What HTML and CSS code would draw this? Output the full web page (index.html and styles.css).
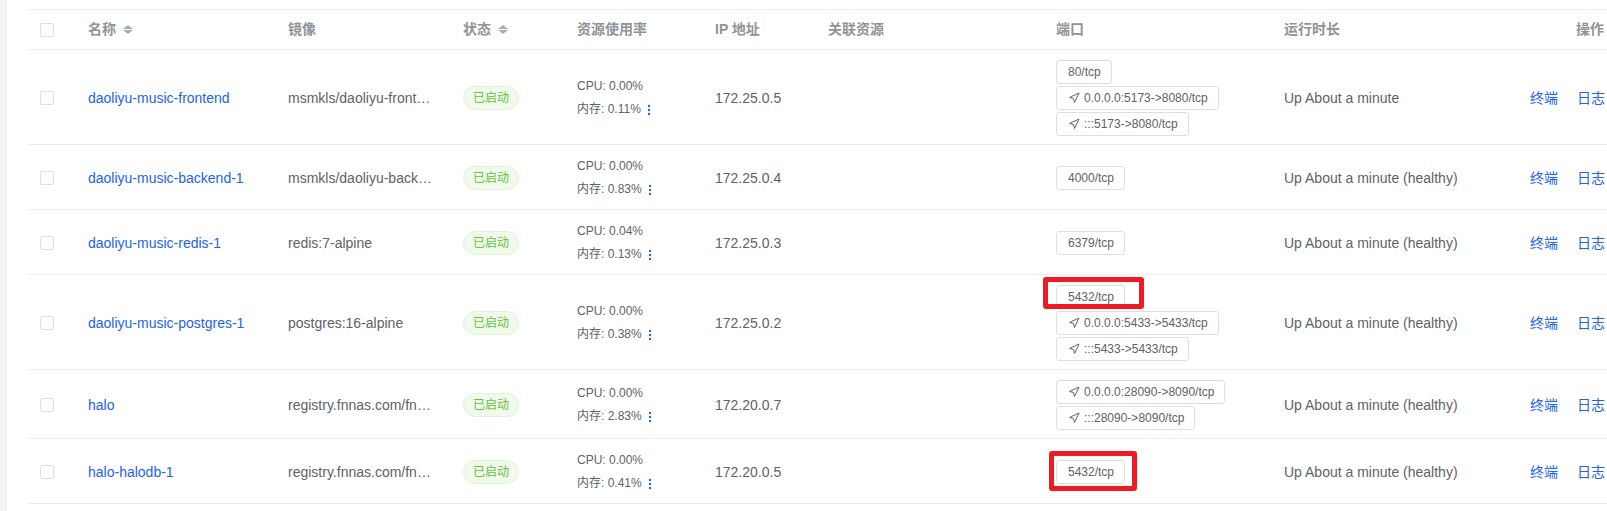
FILE: index.html
```html
<!DOCTYPE html>
<html lang="zh-CN">
<head>
<meta charset="utf-8">
<title>容器列表</title>
<link rel="stylesheet" href="styles.css">
</head>
<body>
<div class="page">
  <div class="side"></div>
  <div class="main">
    <table class="grid">
      <colgroup>
        <col class="w-sel"><col class="w-name"><col class="w-img"><col class="w-status"><col class="w-res"><col class="w-ip"><col class="w-rel"><col class="w-port"><col class="w-up"><col class="w-op">
      </colgroup>
      <thead>
        <tr>
          <th class="sel"><span class="cb"></span></th>
          <th><span class="sortable">名称<span class="caret"><i class="up"></i><i class="down"></i></span></span></th>
          <th>镜像</th>
          <th><span class="sortable">状态<span class="caret"><i class="up"></i><i class="down"></i></span></span></th>
          <th>资源使用率</th>
          <th>IP 地址</th>
          <th>关联资源</th>
          <th>端口</th>
          <th>运行时长</th>
          <th class="op-h">操作</th>
        </tr>
      </thead>
      <tbody>
        <tr>
          <td class="sel"><span class="cb"></span></td>
          <td><a class="link">daoliyu-music-frontend</a></td>
          <td><div class="ell" title="msmkls/daoliyu-frontend:latest">msmkls/daoliyu-front…</div></td>
          <td><span class="badge">已启动</span></td>
          <td><div class="res">CPU: 0.00%</div><div class="res">内存: 0.11%<svg class="kebab" viewBox="0 0 4 12" width="4" height="12"><circle cx="2" cy="2" r="1.2"/><circle cx="2" cy="6" r="1.2"/><circle cx="2" cy="10" r="1.2"/></svg></div></td>
          <td>172.25.0.5</td>
          <td></td>
          <td><div class="ports"><span class="tag">80/tcp</span><span class="tag"><svg class="nav" viewBox="0 0 24 24" width="12" height="12"><polygon points="3 11 22 2 13 21 11 13 3 11"/></svg>0.0.0.0:5173-&gt;8080/tcp</span><span class="tag"><svg class="nav" viewBox="0 0 24 24" width="12" height="12"><polygon points="3 11 22 2 13 21 11 13 3 11"/></svg>:::5173-&gt;8080/tcp</span></div></td>
          <td>Up About a minute</td>
          <td><div class="ops"><a class="link">终端</a><a class="link">日志</a></div></td>
        </tr>
        <tr>
          <td class="sel"><span class="cb"></span></td>
          <td><a class="link">daoliyu-music-backend-1</a></td>
          <td><div class="ell" title="msmkls/daoliyu-backend:latest">msmkls/daoliyu-back…</div></td>
          <td><span class="badge">已启动</span></td>
          <td><div class="res">CPU: 0.00%</div><div class="res">内存: 0.83%<svg class="kebab" viewBox="0 0 4 12" width="4" height="12"><circle cx="2" cy="2" r="1.2"/><circle cx="2" cy="6" r="1.2"/><circle cx="2" cy="10" r="1.2"/></svg></div></td>
          <td>172.25.0.4</td>
          <td></td>
          <td><div class="ports"><span class="tag">4000/tcp</span></div></td>
          <td>Up About a minute (healthy)</td>
          <td><div class="ops"><a class="link">终端</a><a class="link">日志</a></div></td>
        </tr>
        <tr>
          <td class="sel"><span class="cb"></span></td>
          <td><a class="link">daoliyu-music-redis-1</a></td>
          <td><div class="ell">redis:7-alpine</div></td>
          <td><span class="badge">已启动</span></td>
          <td><div class="res">CPU: 0.04%</div><div class="res">内存: 0.13%<svg class="kebab" viewBox="0 0 4 12" width="4" height="12"><circle cx="2" cy="2" r="1.2"/><circle cx="2" cy="6" r="1.2"/><circle cx="2" cy="10" r="1.2"/></svg></div></td>
          <td>172.25.0.3</td>
          <td></td>
          <td><div class="ports"><span class="tag">6379/tcp</span></div></td>
          <td>Up About a minute (healthy)</td>
          <td><div class="ops"><a class="link">终端</a><a class="link">日志</a></div></td>
        </tr>
        <tr>
          <td class="sel"><span class="cb"></span></td>
          <td><a class="link">daoliyu-music-postgres-1</a></td>
          <td><div class="ell">postgres:16-alpine</div></td>
          <td><span class="badge">已启动</span></td>
          <td><div class="res">CPU: 0.00%</div><div class="res">内存: 0.38%<svg class="kebab" viewBox="0 0 4 12" width="4" height="12"><circle cx="2" cy="2" r="1.2"/><circle cx="2" cy="6" r="1.2"/><circle cx="2" cy="10" r="1.2"/></svg></div></td>
          <td>172.25.0.2</td>
          <td></td>
          <td><div class="ports"><span class="tag mark mark-a">5432/tcp</span><span class="tag"><svg class="nav" viewBox="0 0 24 24" width="12" height="12"><polygon points="3 11 22 2 13 21 11 13 3 11"/></svg>0.0.0.0:5433-&gt;5433/tcp</span><span class="tag"><svg class="nav" viewBox="0 0 24 24" width="12" height="12"><polygon points="3 11 22 2 13 21 11 13 3 11"/></svg>:::5433-&gt;5433/tcp</span></div></td>
          <td>Up About a minute (healthy)</td>
          <td><div class="ops"><a class="link">终端</a><a class="link">日志</a></div></td>
        </tr>
        <tr>
          <td class="sel"><span class="cb"></span></td>
          <td><a class="link">halo</a></td>
          <td><div class="ell" title="registry.fnnas.com/fnapp/halo:latest">registry.fnnas.com/fn…</div></td>
          <td><span class="badge">已启动</span></td>
          <td><div class="res">CPU: 0.00%</div><div class="res">内存: 2.83%<svg class="kebab" viewBox="0 0 4 12" width="4" height="12"><circle cx="2" cy="2" r="1.2"/><circle cx="2" cy="6" r="1.2"/><circle cx="2" cy="10" r="1.2"/></svg></div></td>
          <td>172.20.0.7</td>
          <td></td>
          <td><div class="ports"><span class="tag"><svg class="nav" viewBox="0 0 24 24" width="12" height="12"><polygon points="3 11 22 2 13 21 11 13 3 11"/></svg>0.0.0.0:28090-&gt;8090/tcp</span><span class="tag"><svg class="nav" viewBox="0 0 24 24" width="12" height="12"><polygon points="3 11 22 2 13 21 11 13 3 11"/></svg>:::28090-&gt;8090/tcp</span></div></td>
          <td>Up About a minute (healthy)</td>
          <td><div class="ops"><a class="link">终端</a><a class="link">日志</a></div></td>
        </tr>
        <tr>
          <td class="sel"><span class="cb"></span></td>
          <td><a class="link">halo-halodb-1</a></td>
          <td><div class="ell" title="registry.fnnas.com/fnapp/postgres:latest">registry.fnnas.com/fn…</div></td>
          <td><span class="badge">已启动</span></td>
          <td><div class="res">CPU: 0.00%</div><div class="res">内存: 0.41%<svg class="kebab" viewBox="0 0 4 12" width="4" height="12"><circle cx="2" cy="2" r="1.2"/><circle cx="2" cy="6" r="1.2"/><circle cx="2" cy="10" r="1.2"/></svg></div></td>
          <td>172.20.0.5</td>
          <td></td>
          <td><div class="ports"><span class="tag mark mark-b">5432/tcp</span></div></td>
          <td>Up About a minute (healthy)</td>
          <td><div class="ops"><a class="link">终端</a><a class="link">日志</a></div></td>
        </tr>
      </tbody>
    </table>
  </div>
</div>
</body>
</html>
```

FILE: styles.css
```css
html, body {
  margin: 0;
  padding: 0;
  background: #ffffff;
}

body {
  font-family: "Liberation Sans", "Noto Sans CJK SC", sans-serif;
  font-size: 14px;
  color: #606266;
}

.page {
  display: flex;
  width: 1607px;
  height: 511px;
  overflow: hidden;
}

.side {
  flex: none;
  width: 7px;
  background: #f2f3f5;
}

.main {
  flex: 1;
  min-width: 0;
  padding: 9px 0 0 21px;
  overflow: hidden;
}

.grid {
  border-collapse: separate;
  border-spacing: 0;
  table-layout: fixed;
  width: 1612px;
}

.w-sel { width: 50px; }
.w-name { width: 200px; }
.w-img { width: 175px; }
.w-status { width: 114px; }
.w-res { width: 138px; }
.w-ip { width: 113px; }
.w-rel { width: 228px; }
.w-port { width: 228px; }
.w-up { width: 246px; }
.w-op { width: 120px; }

th {
  padding: 8px 10px;
  line-height: 23px;
  text-align: left;
  font-weight: 700;
  color: #909399;
  white-space: nowrap;
  border-top: 1px solid #ebeef5;
  border-bottom: 1px solid #ebeef5;
  vertical-align: middle;
}

td {
  padding: 10px 10px 8px;
  line-height: 23px;
  white-space: nowrap;
  vertical-align: middle;
  border-bottom: 1px solid #ebeef5;
}

th.sel, td.sel {
  padding-left: 12px;
  padding-right: 0;
}

th.op-h {
  padding-left: 56px;
}

.cb {
  display: block;
  box-sizing: border-box;
  width: 14px;
  height: 14px;
  border: 1px solid #dcdfe6;
  border-radius: 2px;
  background: #fff;
}

.sortable {
  display: inline-flex;
  align-items: center;
}

.caret {
  display: inline-flex;
  flex-direction: column;
  gap: 1px;
  margin-left: 7px;
}

.caret i {
  display: block;
  width: 0;
  height: 0;
  border-left: 5px solid transparent;
  border-right: 5px solid transparent;
}

.caret .up { border-bottom: 4px solid #a8abb2; }
.caret .down { border-top: 4px solid #a8abb2; }

.link {
  color: #2163ee;
  text-decoration: none;
  cursor: pointer;
}

.ell {
  white-space: nowrap;
}

.badge {
  display: inline-block;
  box-sizing: border-box;
  height: 24px;
  line-height: 22px;
  padding: 0 9px;
  font-size: 12px;
  color: #67c23a;
  background: #f0f9eb;
  border: 1px solid #e1f3d8;
  border-radius: 12px;
  vertical-align: middle;
}

.res {
  font-size: 12px;
  line-height: 23px;
  display: flex;
  align-items: center;
}

.kebab {
  margin-left: 6px;
  fill: #2163ee;
}

.ports {
  display: flex;
  flex-direction: column;
  align-items: flex-start;
  gap: 2px;
}

.tag {
  display: inline-flex;
  align-items: center;
  gap: 4px;
  box-sizing: border-box;
  height: 24px;
  padding: 0 10px 0 11px;
  font-size: 12px;
  line-height: 22px;
  color: #606266;
  border: 1px solid #dcdfe6;
  border-radius: 3px;
  background: #fff;
}

.nav polygon {
  fill: none;
  stroke: #606266;
  stroke-width: 2;
  stroke-linejoin: round;
}

.mark {
  position: relative;
}

.mark::after {
  content: "";
  position: absolute;
  border: 5px solid #ed1c24;
  border-radius: 3px;
  pointer-events: none;
}

.mark-a::after {
  left: -14px;
  right: -20px;
  top: -9px;
  bottom: -1px;
}

.mark-b::after {
  left: -8px;
  right: -13px;
  top: -10px;
  bottom: -8px;
}

.ops {
  display: flex;
  gap: 19px;
}
```
